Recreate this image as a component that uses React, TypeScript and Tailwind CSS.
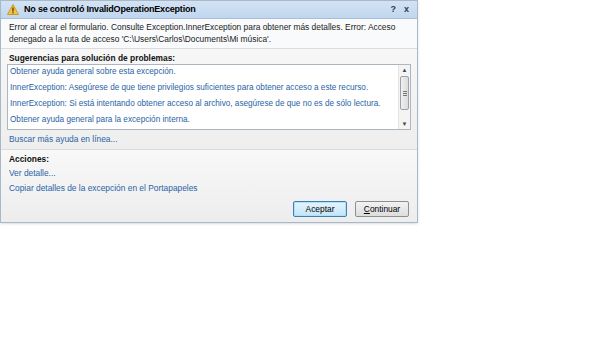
import React from "react";

const links = [
  "Obtener ayuda general sobre esta excepción.",
  "InnerException: Asegúrese de que tiene privilegios suficientes para obtener acceso a este recurso.",
  "InnerException: Si está intentando obtener acceso al archivo, asegúrese de que no es de sólo lectura.",
  "Obtener ayuda general para la excepción interna.",
];

function WarningIcon() {
  return (
    <svg width="12" height="11" viewBox="0 0 12 11">
      <path d="M6 0.5L11.5 10.5H0.5Z" fill="#f5c542" stroke="#c98a12" strokeWidth="0.8" strokeLinejoin="round" />
      <rect x="5.4" y="3.5" width="1.2" height="4" fill="#3a2a00" />
      <rect x="5.4" y="8.2" width="1.2" height="1.2" fill="#3a2a00" />
    </svg>
  );
}

export default function App() {
  return (
    <div className="w-[600px] h-[337px] bg-white" style={{ fontFamily: '"Liberation Sans", Arial, sans-serif' }}>
      <div className="w-[418px] border border-[#a9b8c9] bg-[#f1f1f1] shadow-sm whitespace-nowrap">
        {/* Title bar */}
        <div className="h-[18px] flex items-center px-[6px] bg-gradient-to-b from-[#d3e3f4] to-[#c0d6ee] border-b border-[#a9bdd6]">
          <WarningIcon />
          <span className="ml-[5px] text-[9px] font-bold text-black tracking-[-0.2px]">
            No se controló InvalidOperationException
          </span>
          <div className="ml-auto flex items-center gap-[8px] text-[9px] font-bold text-[#2b3b55] pr-[2px]">
            <span>?</span>
            <span>x</span>
          </div>
        </div>

        {/* Error message */}
        <div className="bg-[#f9fafb] px-[8px] pt-[2px] pb-[3px] text-[8.4px] leading-[12px] text-[#1a1a1a] border-b border-[#dcdcdc]">
          Error al crear el formulario. Consulte Exception.InnerException para obtener más detalles. Error: Acceso
          <br />
          denegado a la ruta de acceso 'C:\Users\Carlos\Documents\Mi música'.
        </div>

        {/* Suggestions */}
        <div className="bg-gradient-to-b from-[#f7f7f7] to-[#eeeeee] px-[6px] pt-[3px] pb-[4px]">
          <div className="px-[2px] text-[8.4px] font-bold text-[#111] leading-[12px]">
            Sugerencias para solución de problemas:
          </div>
          <div className="h-[66px] flex bg-white border border-[#adb5bf]">
            <div className="flex-1 flex flex-col pl-[2px] -mt-[1px] overflow-hidden">
              {links.map((l) => (
                <div key={l} className="h-[16px] flex items-center text-[8.2px] text-[#2a63a5]">
                  {l}
                </div>
              ))}
            </div>
            <div className="w-[12px] flex flex-col items-center bg-[#f4f4f4] border-l border-[#e4e4e4]">
              <div className="h-[10px] text-[6px] leading-[10px] text-[#444]">▲</div>
              <div className="w-[9px] h-[34px] mt-[1px] rounded-[2px] border border-[#9aa3ad] bg-gradient-to-r from-[#f0f0f0] to-[#dcdcdc] flex flex-col items-center justify-center gap-[1px]">
                <div className="w-[4px] h-px bg-[#777]" />
                <div className="w-[4px] h-px bg-[#777]" />
                <div className="w-[4px] h-px bg-[#777]" />
              </div>
              <div className="mt-auto h-[10px] text-[6px] leading-[10px] text-[#444]">▼</div>
            </div>
          </div>
          <div className="px-[2px] mt-[3px] text-[8.4px] leading-[12px] text-[#2a63a5]">Buscar más ayuda en línea...</div>
        </div>

        {/* Actions */}
        <div className="border-t border-[#dcdcdc] bg-gradient-to-b from-[#f8f8f8] to-[#ededed] px-[8px] pt-[3px] pb-[5px]">
          <div className="text-[8.4px] font-bold text-[#111] leading-[12px]">Acciones:</div>
          <div className="mt-[1px] text-[8.4px] leading-[15px] text-[#2a63a5]">Ver detalle...</div>
          <div className="text-[8.4px] leading-[15px] text-[#2a63a5]">Copiar detalles de la excepción en el Portapapeles</div>
          <div className="flex justify-end gap-[8px] mt-[5px]">
            <button className="w-[54px] h-[16px] rounded-[2px] border border-[#3c7fb1] bg-gradient-to-b from-[#e5f4fc] to-[#c4e4f6] text-[8.4px] leading-[14px] text-black shadow-[inset_0_0_0_1px_#b4e0f7]">
              Aceptar
            </button>
            <button className="w-[54px] h-[16px] rounded-[2px] border border-[#8e8f8f] bg-gradient-to-b from-[#f2f2f2] to-[#dddddd] text-[8.4px] leading-[14px] text-black">
              <span className="underline">C</span>ontinuar
            </button>
          </div>
        </div>
      </div>
    </div>
  );
}
